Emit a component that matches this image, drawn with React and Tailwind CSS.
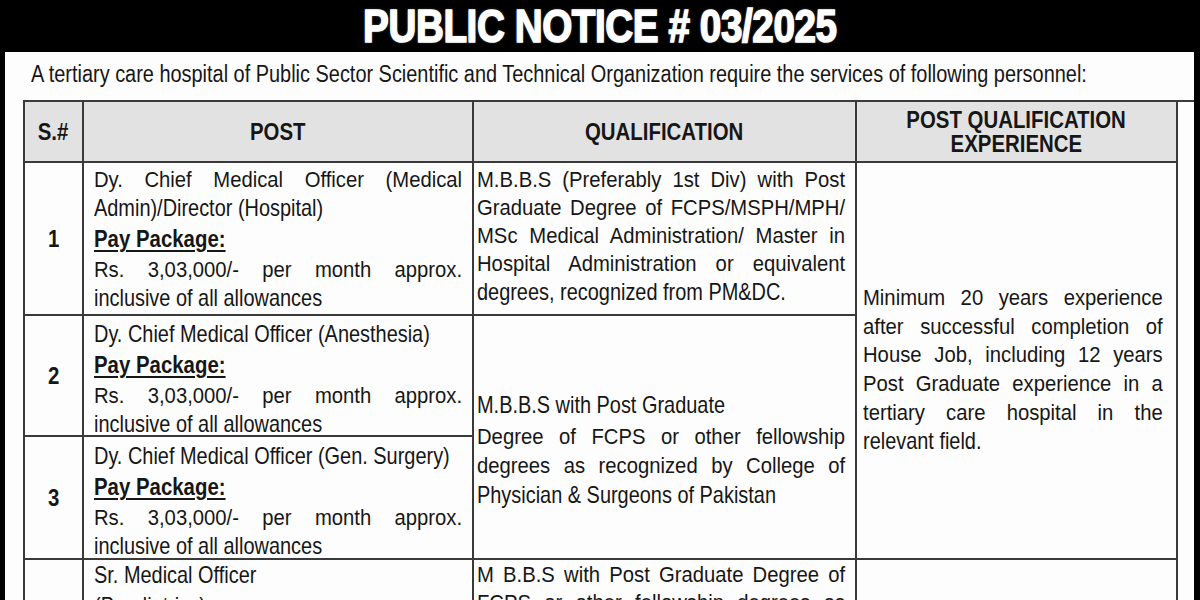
const sans = "font-['Liberation_Sans',Arial,sans-serif]"
const cell = 'border-r-2 border-b-2 border-[#3a3a3a]'

// justified line: laid out wider, then squeezed back to the cell width
const J = ({ w, children }) => (
  <div className={`${w} origin-left scale-x-[0.9] text-[22.5px] text-justify [text-align-last:justify]`}>
    {children}
  </div>
)

// condensed left-aligned line
const N = ({ children }) => (
  <div className="whitespace-nowrap">
    <span className="inline-block origin-left scale-x-[0.83] text-[24px]">{children}</span>
  </div>
)

const Pay = () => (
  <div className="whitespace-nowrap">
    <span className="inline-block origin-left scale-x-[0.85] text-[24px] font-bold underline underline-offset-[3px] decoration-[1.5px]">
      Pay Package:
    </span>
  </div>
)

const Head = ({ children }) => (
  <span className="inline-block whitespace-nowrap scale-x-[0.85] text-[24px] font-bold">{children}</span>
)

const Num = ({ n }) => (
  <div className={`${cell} flex items-center justify-center`}>
    <Head>{n}</Head>
  </div>
)

const POST_W = 'w-[409px]'
const EXP_W = 'w-[333px]'

const App = () => {
  return (
    <div className={`w-[1200px] h-[600px] overflow-hidden bg-black flex flex-col text-[#161616] ${sans}`}>
      {/* Title band */}
      <div className="h-[52px] shrink-0 flex items-center justify-center">
        <h1 className="inline-block whitespace-nowrap scale-x-[0.84] text-[46px] leading-none font-bold text-white tracking-[-0.5px] [-webkit-text-stroke:1.5px_#fff] [text-shadow:0_0_3px_#888]">
          PUBLIC NOTICE # 03/2025
        </h1>
      </div>

      {/* Paper */}
      <div className="flex-1 ml-[5px] mr-[6px] bg-[#fdfdfd] pl-[18px] overflow-hidden">
        <div className="h-[48px] pl-[8px] pt-[8px] leading-[28px] whitespace-nowrap">
          <span className="inline-block origin-left scale-x-[0.866] text-[23px]">
            A tertiary care hospital of Public Sector Scientific and Technical Organization require the services of following personnel:
          </span>
        </div>

        <div className="grid grid-cols-[59px_390px_383px_321px] grid-rows-[61px_153px_121px_123px_120px] border-t-2 border-l-2 border-[#3a3a3a] leading-[28px]">
          {/* Header */}
          <div className={`${cell} bg-[#e2e2e2] flex items-center justify-center`}><Head>S.#</Head></div>
          <div className={`${cell} bg-[#e2e2e2] flex items-center justify-center`}><Head>POST</Head></div>
          <div className={`${cell} bg-[#e2e2e2] flex items-center justify-center`}><Head>QUALIFICATION</Head></div>
          <div className={`${cell} bg-[#e2e2e2] flex flex-col items-center justify-center gap-[1px] leading-[23px]`}>
            <Head>POST QUALIFICATION</Head>
            <Head>EXPERIENCE</Head>
          </div>

          {/* Row 1 */}
          <Num n="1" />
          <div className={`${cell} pl-[10px] pt-[3px]`}>
            <J w={POST_W}>Dy. Chief Medical Officer (Medical</J>
            <N>Admin)/Director (Hospital)</N>
            <Pay />
            <J w={POST_W}>Rs. 3,03,000/- per month approx.</J>
            <N>inclusive of all allowances</N>
          </div>
          <div className={`${cell} pl-[3px] pt-[3px]`}>
            <J w={POST_W}>M.B.B.S (Preferably 1st Div) with Post</J>
            <J w={POST_W}>Graduate Degree of FCPS/MSPH/MPH/</J>
            <J w={POST_W}>MSc Medical Administration/ Master in</J>
            <J w={POST_W}>Hospital Administration or equivalent</J>
            <N>degrees, recognized from PM&amp;DC.</N>
          </div>
          <div className={`${cell} row-span-3 flex flex-col justify-center pl-[6px] pt-[22px] leading-[28.7px]`}>
            <J w={EXP_W}>Minimum 20 years experience</J>
            <J w={EXP_W}>after successful completion of</J>
            <J w={EXP_W}>House Job, including 12 years</J>
            <J w={EXP_W}>Post Graduate experience in a</J>
            <J w={EXP_W}>tertiary care hospital in the</J>
            <N>relevant field.</N>
          </div>

          {/* Row 2 */}
          <Num n="2" />
          <div className={`${cell} pl-[10px] pt-[4px]`}>
            <N>Dy. Chief Medical Officer (Anesthesia)</N>
            <Pay />
            <J w={POST_W}>Rs. 3,03,000/- per month approx.</J>
            <N>inclusive of all allowances</N>
          </div>
          <div className={`${cell} row-span-2 flex flex-col justify-center pl-[3px] pt-[28px] leading-[29px]`}>
            <N>M.B.B.S with Post Graduate</N>
            <J w={POST_W}>Degree of FCPS or other fellowship</J>
            <J w={POST_W}>degrees as recognized by College of</J>
            <N>Physician &amp; Surgeons of Pakistan</N>
          </div>

          {/* Row 3 */}
          <Num n="3" />
          <div className={`${cell} pl-[10px] pt-[5px]`}>
            <N>Dy. Chief Medical Officer (Gen. Surgery)</N>
            <Pay />
            <J w={POST_W}>Rs. 3,03,000/- per month approx.</J>
            <N>inclusive of all allowances</N>
          </div>

          {/* Row 4 */}
          <Num n="" />
          <div className={`${cell} pl-[10px] pt-[1px]`}>
            <N>Sr. Medical Officer</N>
            <N>(Paediatrics)</N>
          </div>
          <div className={`${cell} pl-[3px] pt-[1px]`}>
            <J w={POST_W}>M B.B.S with Post Graduate Degree of</J>
            <J w={POST_W}>FCPS or other fellowship degrees as</J>
          </div>
          <div className={cell} />
        </div>
      </div>
    </div>
  )
}

export default App
